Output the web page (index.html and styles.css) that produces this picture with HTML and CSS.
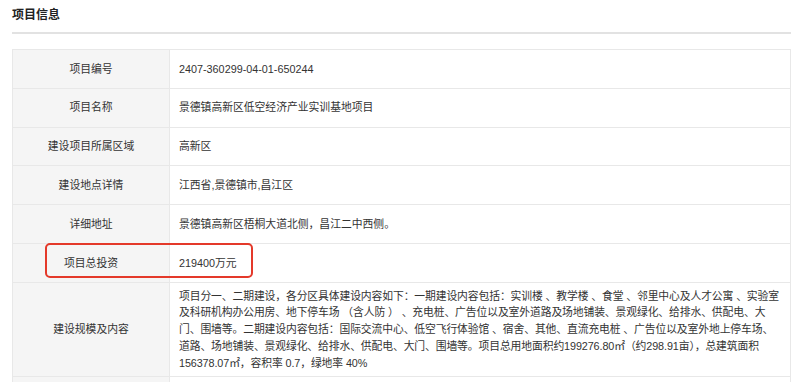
FILE: index.html
```html
<!DOCTYPE html>
<html lang="zh-CN">
<head>
<meta charset="utf-8">
<title>项目信息</title>
<link rel="stylesheet" href="styles.css">
</head>
<body>
<div class="section">
  <div class="title">项目信息</div>
  <div class="table-wrap">
    <table class="info">
      <tr><td class="label">项目编号</td><td class="value">2407-360299-04-01-650244</td></tr>
      <tr><td class="label">项目名称</td><td class="value">景德镇高新区低空经济产业实训基地项目</td></tr>
      <tr><td class="label">建设项目所属区域</td><td class="value">高新区</td></tr>
      <tr><td class="label">建设地点详情</td><td class="value">江西省,景德镇市,昌江区</td></tr>
      <tr><td class="label">详细地址</td><td class="value">景德镇高新区梧桐大道北侧，昌江二中西侧。</td></tr>
      <tr><td class="label">项目总投资</td><td class="value">219400万元</td></tr>
      <tr><td class="label">建设规模及内容</td><td class="value long"><span class="line">项目分一、二期建设，各分区具体建设内容如下：一期建设内容包括：实训楼 、教学楼 、食堂 、邻里中心及人才公寓 、实验室</span><span class="line">及科研机构办公用房、地下停车场 （含人防 ） 、充电桩、广告位以及室外道路及场地铺装、景观绿化、给排水、供配电、大</span><span class="line">门、围墙等。二期建设内容包括：国际交流中心、低空飞行体验馆 、宿舍、其他、直流充电桩 、广告位以及室外地上停车场、</span><span class="line">道路、场地铺装、景观绿化、给排水、供配电、大门、围墙等。项目总用地面积约199276.80㎡（约298.91亩），总建筑面积</span><span class="line">156378.07㎡，容积率 0.7，绿地率 40%</span></td></tr>
      <tr><td class="label">&nbsp;</td><td class="value">&nbsp;</td></tr>
    </table>
    <div class="highlight"></div>
  </div>
</div>
</body>
</html>
```
FILE: styles.css
```css
html, body {
  margin: 0;
  padding: 0;
  background: #ffffff;
}
body {
  font-family: "Liberation Sans", "Noto Sans CJK SC", sans-serif;
  color: #333333;
}
.section {
  padding: 0 9px 0 12px;
}
.title {
  font-size: 12px;
  font-weight: bold;
  line-height: 16px;
  padding: 7px 0 9px;
  border-bottom: 2px solid #e2e2e2;
  color: #222222;
}
.table-wrap {
  position: relative;
  margin-top: 15px;
}
.info {
  width: 100%;
  table-layout: fixed;
  border-collapse: collapse;
  border: 1px solid #e4e4e4;
  font-size: 10.8px;
  line-height: 16.7px;
}
.info td {
  border: 1px solid #e8e8e8;
  height: 37.8px;
  padding: 0 9px;
  vertical-align: middle;
}
.info .label {
  width: 138px;
  background: #f5f5f5;
  text-align: center;
  color: #333333;
}
.info .value {
  background: #ffffff;
  color: #333333;
}
.info .long {
  padding: 5px 9px;
  letter-spacing: -0.1px;
}
.line {
  display: block;
  white-space: nowrap;
}
.highlight {
  position: absolute;
  left: 33px;
  top: 194px;
  width: 208px;
  height: 35px;
  box-sizing: border-box;
  border: 2px solid #e4392a;
  border-radius: 5px;
}
```
